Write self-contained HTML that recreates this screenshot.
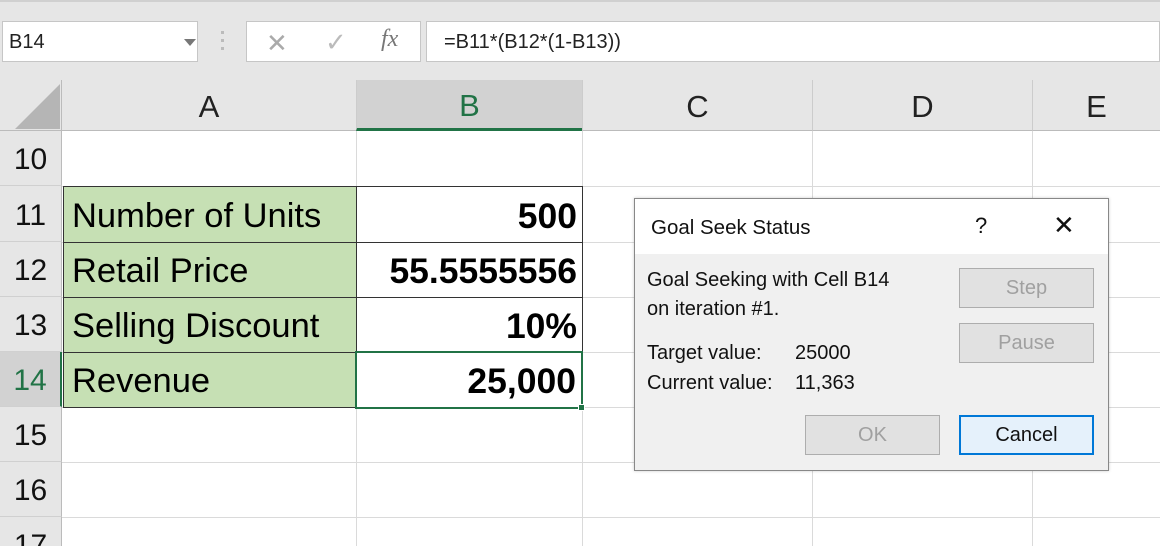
<!DOCTYPE html>
<html style="width:1160px;height:546px;overflow:hidden"><head><style>
*{margin:0;padding:0;box-sizing:border-box}
body{width:1160px;height:546px;overflow:hidden;background:#fff;font-family:"Liberation Sans",sans-serif;position:relative}
.a{position:absolute}
.hd{background:#e6e6e6;color:#222;font-size:31px;display:flex;align-items:center;justify-content:center;padding-top:4px}
.rh{background:#e6e6e6;font-size:30px;color:#111;display:flex;align-items:center;justify-content:center;width:62px;left:0;border-right:1px solid #bbb;border-bottom:1px solid #d0d0d0;padding-top:4px}
.vl{position:absolute;top:131px;bottom:0;width:1px;background:#dadada}
.hl{position:absolute;left:62px;right:0;height:1px;background:#dadada}
.g{background:#c6e0b4;font-size:34.5px;color:#000;padding-left:8px;display:flex;align-items:center;border:1px solid #333;padding-top:3px}
.v{font-size:35.5px;font-weight:bold;color:#000;display:flex;align-items:center;justify-content:flex-end;padding-right:5px;border:1px solid #333;background:#fff;padding-top:3px}
.btn{position:absolute;background:#e1e1e1;border:1px solid #adadad;color:#a0a0a0;font-size:20px;display:flex;align-items:center;justify-content:center}
.dt{position:absolute;font-size:20px;color:#111}
</style></head><body>
<div class="a" style="left:0;top:0;width:1160px;height:80px;background:#e6e6e6;border-top:2px solid #d0d0d0"></div>
<div class="a" style="left:2px;top:21px;width:196px;height:41px;background:#fff;border:1px solid #c6c6c6;font-size:20px;color:#222;padding:9px 6px">B14</div>
<div class="a" style="left:184px;top:39px;width:0;height:0;border-left:6px solid transparent;border-right:6px solid transparent;border-top:7px solid #777"></div>
<div class="a" style="left:221px;top:31px;width:3px;height:21px;background:repeating-linear-gradient(#bbb 0 3px,transparent 3px 8px)"></div>
<div class="a" style="left:246px;top:21px;width:175px;height:41px;background:#fff;border:1px solid #c6c6c6"></div>
<div class="a" style="left:266px;top:28px;font-size:26px;color:#aaa">✕</div>
<div class="a" style="left:325px;top:27px;font-size:26px;color:#bbb">✓</div>
<div class="a" style="left:381px;top:26px;font-size:24px;color:#777;font-family:'Liberation Serif',serif;font-style:italic">fx</div>
<div class="a" style="left:426px;top:21px;width:734px;height:41px;background:#fff;border:1px solid #c6c6c6;font-size:20px;color:#222;padding:9px 17px">=B11*(B12*(1-B13))</div>
<div class="a hd" style="left:0;top:80px;width:62px;height:51px;border-right:1px solid #bbb;border-bottom:1px solid #bbb"></div>
<div class="a" style="left:15px;top:84px;width:0;height:0;border-left:45px solid transparent;border-bottom:45px solid #b5b5b5"></div>
<div class="a hd" style="left:62px;top:80px;width:294px;height:51px;border-bottom:1px solid #bbb">A</div>
<div class="a hd" style="left:356px;top:80px;width:226px;height:51px;background:#d2d2d2;color:#217346;border-bottom:3px solid #217346;border-left:1px solid #ccc">B</div>
<div class="a hd" style="left:582px;top:80px;width:230px;height:51px;border-bottom:1px solid #bbb;border-left:1px solid #ccc">C</div>
<div class="a hd" style="left:812px;top:80px;width:220px;height:51px;border-bottom:1px solid #bbb;border-left:1px solid #ccc">D</div>
<div class="a hd" style="left:1032px;top:80px;width:128px;height:51px;border-bottom:1px solid #bbb;border-left:1px solid #ccc">E</div>
<div class="a rh" style="top:131px;height:55px">10</div>
<div class="a rh" style="top:186px;height:56px">11</div>
<div class="a rh" style="top:242px;height:55px">12</div>
<div class="a rh" style="top:297px;height:55px">13</div>
<div class="a rh" style="top:352px;height:55px;background:#d2d2d2;color:#217346;border-right:2px solid #217346">14</div>
<div class="a rh" style="top:407px;height:55px">15</div>
<div class="a rh" style="top:462px;height:55px">16</div>
<div class="a" style="left:0;top:517px;width:62px;height:29px;overflow:hidden"><div class="rh" style="position:absolute;top:0;height:55px">17</div></div>
<div class="vl" style="left:356px"></div><div class="vl" style="left:582px"></div><div class="vl" style="left:812px"></div><div class="vl" style="left:1032px"></div>
<div class="hl" style="top:186px"></div><div class="hl" style="top:242px"></div><div class="hl" style="top:297px"></div><div class="hl" style="top:352px"></div><div class="hl" style="top:407px"></div><div class="hl" style="top:462px"></div><div class="hl" style="top:517px"></div>
<div class="a g" style="left:63px;top:186px;width:294px;height:57px">Number of Units</div>
<div class="a g" style="left:63px;top:242px;width:294px;height:56px">Retail Price</div>
<div class="a g" style="left:63px;top:297px;width:294px;height:56px">Selling Discount</div>
<div class="a g" style="left:63px;top:352px;width:294px;height:56px">Revenue</div>
<div class="a v" style="left:356px;top:186px;width:227px;height:57px">500</div>
<div class="a v" style="left:356px;top:242px;width:227px;height:56px">55.5555556</div>
<div class="a v" style="left:356px;top:297px;width:227px;height:56px">10%</div>
<div class="a v" style="left:355px;top:351px;width:228px;height:58px;border:2px solid #217346">25,000</div>
<div class="a" style="left:578px;top:404px;width:7px;height:7px;background:#217346;border:1px solid #fff"></div>
<div class="a" style="left:634px;top:198px;width:475px;height:273px;background:#f0f0f0;border:1px solid #888;box-shadow:0 0 3px rgba(0,0,0,.2)"></div>
<div class="a" style="left:635px;top:199px;width:473px;height:55px;background:#fff"></div>
<div class="dt" style="left:651px;top:216px;font-size:20.5px">Goal Seek Status</div>
<div class="dt" style="left:975px;top:213px;font-size:22px">?</div>
<div class="dt" style="left:1053px;top:210px;font-size:26px;font-weight:300">✕</div>
<div class="dt" style="left:647px;top:269px">Goal Seeking with Cell B14</div>
<div class="dt" style="left:647px;top:298px">on iteration #1.</div>
<div class="dt" style="left:647px;top:342px">Target value:</div>
<div class="dt" style="left:795px;top:342px">25000</div>
<div class="dt" style="left:647px;top:372px">Current value:</div>
<div class="dt" style="left:795px;top:372px">11,363</div>
<div class="btn" style="left:959px;top:268px;width:135px;height:40px">Step</div>
<div class="btn" style="left:959px;top:323px;width:135px;height:40px">Pause</div>
<div class="btn" style="left:805px;top:415px;width:135px;height:40px">OK</div>
<div class="btn" style="left:959px;top:415px;width:135px;height:40px;background:#e5f1fb;border:2px solid #0078d7;color:#111">Cancel</div>
</body></html>
